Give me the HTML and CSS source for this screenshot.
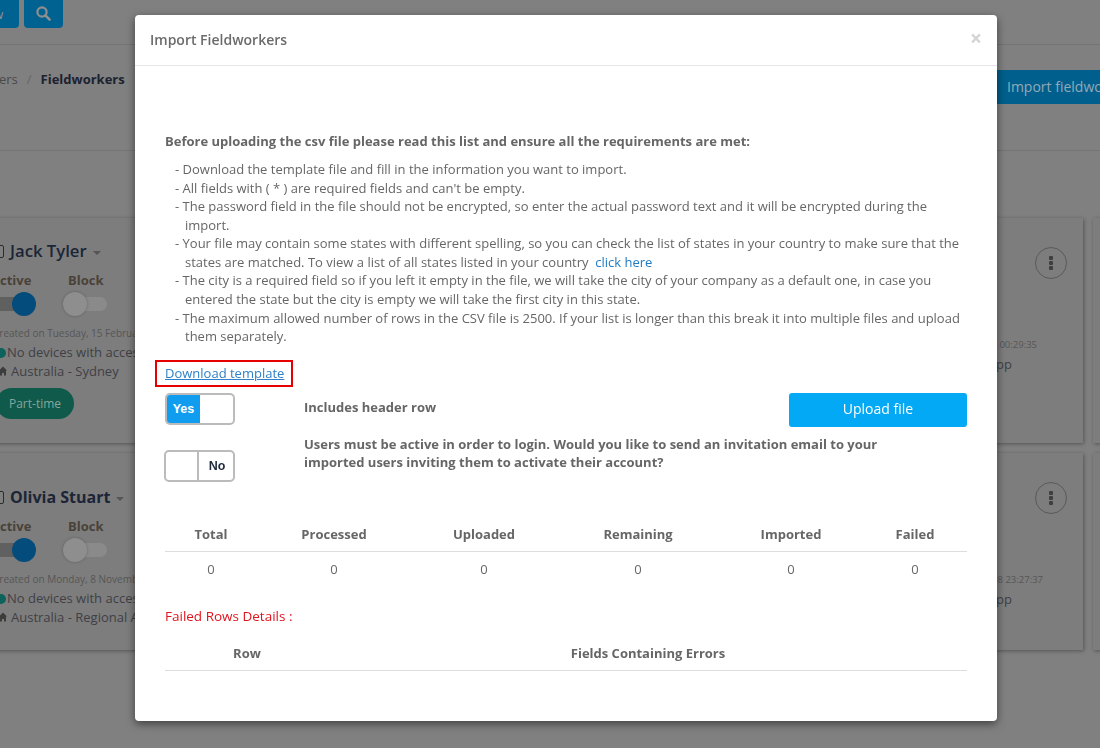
FILE: index.html
```html
<!DOCTYPE html>
<html lang="en">
<head>
<meta charset="utf-8">
<title>Import Fieldworkers</title>
<link rel="stylesheet" href="styles.css">
</head>
<body>
<div class="page">
  <div class="topbar">
    <button class="top-btn view-btn">View</button>
    <button class="top-btn search-btn" aria-label="Search">
      <svg width="15" height="15" viewBox="0 0 15 15"><circle cx="6" cy="6" r="4.6" fill="none" stroke="#8f8f8f" stroke-width="2.2"/><path d="M9.4 9.4L13.6 13.6" stroke="#8f8f8f" stroke-width="2.6" stroke-linecap="round"/></svg>
    </button>
  </div>
  <div class="crumbbar">
    <div class="crumbs"><span>Workers</span><span class="sep">/</span><strong>Fieldworkers</strong></div>
    <button class="import-btn">Import fieldworkers</button>
  </div>
  <div class="cards">
    <article class="card">
      <div class="card-left">
        <div class="name-row"><span class="check"></span><span class="name">Jack Tyler</span><span class="caret"></span></div>
        <div class="switches">
          <div class="sw-col"><b>Active</b><span class="switch on"><i></i></span></div>
          <div class="sw-col"><b>Block</b><span class="switch"><i></i></span></div>
        </div>
        <p class="created">Created on Tuesday, 15 February 2022</p>
        <p class="line"><span class="dot"></span>No devices with access</p>
        <p class="line place"><svg class="pin" width="8" height="10" viewBox="0 0 8 10"><path d="M4 .5L8 4.5H7V9.5H5V7H3V9.5H1V4.5H0Z" fill="#3d3d3d"/></svg>Australia - Sydney</p>
        <span class="pill">Part-time</span>
      </div>
      <div class="card-right">
        <span class="more"><i></i><i></i><i></i></span>
        <p class="time">2022-02-15 00:29:35</p>
        <p class="app">Mobile app</p>
      </div>
    </article>
    <article class="card"></article>
    <article class="card card-low">
      <div class="card-left">
        <div class="name-row"><span class="check"></span><span class="name">Olivia Stuart</span><span class="caret"></span></div>
        <div class="switches">
          <div class="sw-col"><b>Active</b><span class="switch on"><i></i></span></div>
          <div class="sw-col"><b>Block</b><span class="switch"><i></i></span></div>
        </div>
        <p class="created">Created on Monday, 8 November 2021</p>
        <p class="line"><span class="dot"></span>No devices with access</p>
        <p class="line place"><svg class="pin" width="8" height="10" viewBox="0 0 8 10"><path d="M4 .5L8 4.5H7V9.5H5V7H3V9.5H1V4.5H0Z" fill="#3d3d3d"/></svg>Australia - Regional Area</p>
      </div>
      <div class="card-right">
        <span class="more"><i></i><i></i><i></i></span>
        <p class="time">2021-11-08 23:27:37</p>
        <p class="app">Mobile app</p>
      </div>
    </article>
    <article class="card"></article>
  </div>
</div>

<div class="overlay">
  <section class="modal">
    <header class="modal-head">
      <h2>Import Fieldworkers</h2>
      <span class="close">×</span>
    </header>
    <div class="modal-body">
      <p class="lead">Before uploading the csv file please read this list and ensure all the requirements are met:</p>
      <ul class="rules">
        <li>- Download the template file and fill in the information you want to import.</li>
        <li>- All fields with ( * ) are required fields and can't be empty.</li>
        <li>- The password field in the file should not be encrypted, so enter the actual password text and it will be encrypted during the import.</li>
        <li>- Your file may contain some states with different spelling, so you can check the list of states in your country to make sure that the states are matched. To view a list of all states listed in your country &nbsp;<a href="#">click here</a></li>
        <li>- The city is a required field so if you left it empty in the file, we will take the city of your company as a default one, in case you entered the state but the city is empty we will take the first city in this state.</li>
        <li>- The maximum allowed number of rows in the CSV file is 2500. If your list is longer than this break it into multiple files and upload them separately.</li>
      </ul>
      <a class="template" href="#">Download template</a>
      <div class="options">
        <span class="toggle yes"><span class="t-on">Yes</span><span class="t-blank"></span></span>
        <b class="opt-text">Includes header row</b>
        <button class="upload">Upload file</button>
        <span class="toggle no"><span class="t-blank"></span><span class="t-off">No</span></span>
        <b class="opt-text invite">Users must be active in order to login. Would you like to send an invitation email to your imported users inviting them to activate their account?</b>
      </div>
      <table class="stats">
        <thead>
          <tr><th class="c1">Total</th><th class="c2">Processed</th><th class="c3">Uploaded</th><th class="c4">Remaining</th><th class="c5">Imported</th><th class="c6">Failed</th></tr>
        </thead>
        <tbody>
          <tr><td>0</td><td>0</td><td>0</td><td>0</td><td>0</td><td>0</td></tr>
        </tbody>
      </table>
      <p class="failed">Failed Rows Details :</p>
      <table class="stats errors">
        <thead>
          <tr><th class="e1">Row</th><th>Fields Containing Errors</th></tr>
        </thead>
      </table>
    </div>
  </section>
</div>
</body>
</html>
```
FILE: styles.css
```css
* { box-sizing: border-box; }
html, body { margin: 0; height: 100%; overflow: hidden; }
body { background: #808080; font-family: "Open Sans", "Liberation Sans", sans-serif; font-size: 13px; line-height: 1.42857; color: #666; }
p { margin: 0; }
button { font-family: inherit; border: 0; }

.page { width: 1100px; height: 748px; overflow: hidden; }
.topbar { height: 45px; border-bottom: 1px solid #747474; display: flex; gap: 5px; align-items: flex-start; margin-left: -41px; }
.top-btn { height: 28px; background: #006290; color: #8f8f8f; border-radius: 0 0 4px 4px; padding: 0; font-size: 13px; }
.view-btn { width: 60px; }
.search-btn { width: 39px; display: flex; align-items: center; justify-content: center; padding-top: 2px; }
.search-btn svg { margin-top: -4px; }

.crumbbar { height: 106px; border-bottom: 1px solid #747474; display: flex; justify-content: space-between; align-items: flex-start; padding-top: 25px; margin-left: -33px; margin-right: -70px; }
.crumbs { display: flex; gap: 9px; line-height: 19px; color: #4a4a4a; }
.crumbs strong { color: #1c2230; font-weight: 700; }
.crumbs .sep { color: #666; }
.import-btn { width: 173px; height: 34px; background: #005f8c; color: #93aab8; font-size: 14px; text-align: left; padding: 0 0 2px 10px; white-space: nowrap; }

.cards { display: grid; grid-template-columns: 1103px 200px; grid-template-rows: 225px 197px; gap: 10px; margin: 67px 0 0 -20px; }
.card { background: #7d7d7d; box-shadow: 1px 1px 4px rgba(0,0,0,.35); display: flex; justify-content: space-between; padding: 23px 16px 0 11px; }
.card-low { padding-top: 34px; }
.card-left { width: 300px; white-space: nowrap; }
.name-row { display: flex; align-items: center; height: 20px; }
.check { width: 13px; height: 13px; border: 1px solid #2b2b2b; border-radius: 2px; background: #808080; flex: none; }
.name { font-size: 16.7px; font-weight: 600; color: #1b2537; margin-left: 6px; line-height: 20px; }
.card-low .name { font-size: 16px; font-weight: 700; }
.caret { width: 0; height: 0; border: 4px solid transparent; border-top-color: #555; border-bottom: 0; margin-left: 6px; margin-top: 3px; }
.switches { display: flex; gap: 36px; margin-top: 10px; }
.sw-col { display: flex; flex-direction: column; width: 41px; }
.sw-col b { font-size: 13px; line-height: 18px; font-weight: 700; color: #4a4238; }
.switch { display: block; position: relative; width: 39px; height: 14px; border-radius: 7px; background: #8a8a8a; margin-top: 8px; margin-bottom: 7px; }
.switch i { position: absolute; left: -5px; top: -5px; width: 24px; height: 24px; border-radius: 50%; background: #8e8e8e; box-shadow: 0 0 3px rgba(0,0,0,.25); }
.switch.on { width: 44px; background: #606060; margin-left: -3px; }
.switch.on i { left: 24px; background: #034c7c; box-shadow: none; }
.created { font-size: 10px; line-height: 15px; color: #565656; margin-top: 8px; margin-left: 2px; }
.line { font-size: 13px; line-height: 19px; color: #3f3f46; margin-top: 2px; display: flex; align-items: center; white-space: pre; }
.dot { width: 10px; height: 10px; border-radius: 50%; background: #0e625c; margin: 0 1px 0 5px; }
.place { margin-top: 0; padding-left: 8px; }
.pin { margin-right: 4px; margin-top: -1px; }
.pill { display: inline-block; width: 78px; height: 31px; border-radius: 16px; background: #105a4b; color: #84a69e; font-size: 12px; line-height: 31px; text-align: center; margin-top: 7px; margin-left: 5px; }
.card-right { width: 70px; white-space: nowrap; display: flex; flex-direction: column; align-items: flex-end; }
.more { width: 32px; height: 32px; margin-top: 6px; border: 1px solid #5a5a5a; border-radius: 50%; display: flex; flex-direction: column; align-items: center; justify-content: center; gap: 1px; flex: none; }
.card-low .more { margin-top: -5px; }
.more i { width: 4px; height: 4px; border-radius: 1px; background: #3f3f3f; }
.time { font-size: 9.5px; line-height: 15px; color: #565656; margin: 58px 30px 0 0; }
.card-low .time { margin-right: 24px; }
.app { font-size: 13px; line-height: 19px; color: #3f3f46; margin: 3px 55px 0 0; }

.overlay { position: fixed; inset: 0; overflow: hidden; }
.modal { width: 862px; height: 706px; margin: 15px 0 0 135px; background: #fff; border-radius: 4px; box-shadow: 0 3px 9px rgba(0,0,0,.5); display: flex; flex-direction: column; }
.modal-head { height: 51px; flex: none; border-bottom: 1px solid #e5e5e5; display: flex; justify-content: space-between; align-items: center; padding: 0 15px; }
.modal-head h2 { margin: 0; font-size: 14px; font-weight: 600; color: #6b6b6b; line-height: 20px; }
.close { font-size: 21px; font-weight: 700; line-height: 1; color: #d4d4d4; margin-top: -4px; }
.modal-body { padding: 65px 30px 0; }
.lead { font-weight: 700; color: #666; line-height: 20px; }
.rules { list-style: none; margin: 9px 0 0; padding: 0 0 0 20px; color: #666; }
.rules li { text-indent: -10px; }
.rules a { color: #1f7cc4; text-decoration: none; }
.template { display: block; width: 138px; height: 27px; margin: 14px 0 0 -10px; border: 2px solid #e60000; padding-left: 8px; line-height: 23px; color: #2f80c8; text-decoration: underline; }
.options { display: grid; grid-template-columns: 139px 485px 178px; align-items: start; margin-top: 6px; }
.toggle { display: flex; width: 70px; height: 32px; border: 2px solid #bbb; border-radius: 5px; overflow: hidden; background: #fff; font-family: "Liberation Sans", Arial, sans-serif; font-size: 12.5px; font-weight: 700; line-height: 28px; }
.t-on { width: 33px; background: #109df0; color: #fff; text-align: center; flex: none; }
.t-blank { flex: 1; }
.toggle.no { width: 71px; margin-left: -1px; margin-top: 23px; }
.toggle.no .t-blank { flex: none; width: 33px; border-right: 2px solid #bbb; }
.t-off { flex: 1; color: #1f2b3d; text-align: center; padding-left: 2px; }
.opt-text { font-weight: 700; color: #666; line-height: 18.57px; padding-top: 5px; }
.invite { grid-column: 2 / 4; max-width: 590px; padding-top: 8px; }
.upload { width: 178px; height: 34px; background: #03a9f4; color: #fff; font-size: 14px; border-radius: 3px; padding: 0 0 2px; }
.stats { width: 802px; border-collapse: collapse; table-layout: fixed; margin-top: 35px; color: #666; }
.stats th { font-weight: 700; height: 35px; padding: 8px 0; border-bottom: 1px solid #ddd; text-align: center; }
.stats td { height: 36px; padding: 0 0 2px; text-align: center; }
.c1 { width: 92px; } .c2 { width: 154px; } .c3 { width: 146px; } .c4 { width: 162px; } .c5 { width: 144px; } .c6 { width: 104px; }
.e1 { width: 164px; }
.failed { color: #e0141c; font-size: 13.5px; margin-top: 19px; line-height: 19px; }
.stats.errors { margin-top: 10px; }
```
